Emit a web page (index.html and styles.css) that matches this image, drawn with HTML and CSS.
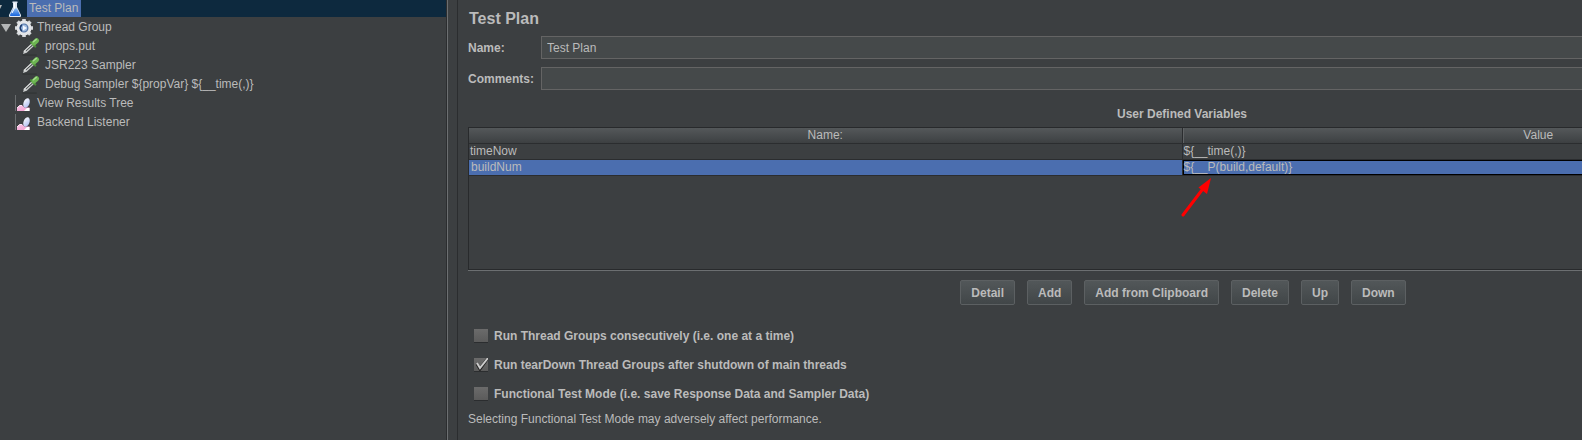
FILE: index.html
```html
<!DOCTYPE html>
<html lang="en">
<head>
<meta charset="utf-8">
<title>Test Plan</title>
<link rel="stylesheet" href="styles.css">
</head>
<body>
<svg class="defs" aria-hidden="true">
  <defs>
    <linearGradient id="flask" x1="0" y1="0" x2="0" y2="1"><stop offset="0" stop-color="#8fbdf0"/><stop offset="1" stop-color="#1462dc"/></linearGradient>
    <linearGradient id="pink" x1="0" y1="0" x2="1" y2="1"><stop offset="0" stop-color="#f7c4e4"/><stop offset="1" stop-color="#f39bd0"/></linearGradient>
    <linearGradient id="lens" x1="0" y1="0" x2="1" y2="1"><stop offset="0" stop-color="#ffffff"/><stop offset="1" stop-color="#a9b9f0"/></linearGradient>
    <symbol id="i-flask" viewBox="0 0 16 18"><path d="M5.500 1.500h5v1.500h-.5v4l4 8q.6 2-1 2H3q-1.600 0-1-2l4-8V3h-.5z" fill="#dfe8f4"/><path d="M6 8.500h4l3 6.500q.2 1-.8 1H3.800q-1 0-.8-1z" fill="url(#flask)"/><path d="M7.500 3v5l-2.500 5" stroke="#fff" fill="none"/></symbol>
    <symbol id="i-gear" viewBox="0 0 20 20"><path d="M10 1v18M1 10h18M3.600 3.600l12.800 12.800M16.400 3.600L3.600 16.400" stroke="#d6d9dc" stroke-width="3.600"/><circle cx="10" cy="10" r="6" fill="#5475a5" stroke="#e4e6e9" stroke-width="3"/><circle cx="9.800" cy="10" r="3.400" fill="#9db9df"/><path d="M9 7.500l4 2.500-4 2.500z" fill="#f4f8ff"/><path d="M8 7a3.500 3.500 0 0 0 0 6" stroke="#1d3c6e" stroke-width="1.500" fill="none"/></symbol>
    <symbol id="i-dropper" viewBox="0 0 20 20"><path d="M1 19h15" stroke="#2e3132"/><path d="M1.500 18l1.500-4L10.500 7l2.500 2.500L5.500 16.500z" fill="#c9cccc"/><path d="M4.500 14.500L11.500 8.500" stroke="#4d5152" stroke-width="1.200"/><path d="M2.500 15.500L10.500 7.500" stroke="#f4f5f5" stroke-width="1"/><path d="M10 5.500l4.500 4.500" stroke="#4a8a38" stroke-width="2.400" stroke-linecap="round"/><path d="M13 6.500L16 3.800" stroke="#6db552" stroke-width="5" stroke-linecap="round"/><path d="M12.500 5L15.500 2.500" stroke="#a5dc8e" stroke-width="1.600" stroke-linecap="round"/></symbol>
    <symbol id="i-chart" viewBox="0 0 17 19"><path d="M.5 1v16" stroke="#6a6d6f"/><path d="M2 17v-3l2.500-2.500h3l2 2h5V17z" fill="url(#pink)"/><ellipse cx="11.500" cy="9" rx="3" ry="5" transform="rotate(20 11.500 9)" fill="url(#lens)"/><path d="M9 17l3-3h2.500v3z" fill="#fff"/><path d="M2 14l2.500-2.500h2.500" stroke="#fde7f5" fill="none"/></symbol>
  </defs>
</svg>
<div class="app">
  <nav class="tree" aria-label="Test plan tree">
    <div class="node root"><svg class="arrow" viewBox="0 0 10 10"><path d="M0 1h8L4 9z"/></svg><svg class="icon flask"><use href="#i-flask"/></svg><span class="selected">Test Plan</span></div>
    <div class="node group"><svg class="arrow" viewBox="0 0 10 10"><path d="M0 1h10L5 9z"/></svg><svg class="icon gear"><use href="#i-gear"/></svg><span>Thread Group</span></div>
    <div class="node child"><svg class="icon dropper"><use href="#i-dropper"/></svg><span>props.put</span></div>
    <div class="node child"><svg class="icon dropper"><use href="#i-dropper"/></svg><span>JSR223 Sampler</span></div>
    <div class="node child"><svg class="icon dropper"><use href="#i-dropper"/></svg><span>Debug Sampler ${propVar} ${__time(,)}</span></div>
    <div class="node listener"><svg class="icon chart"><use href="#i-chart"/></svg><span>View Results Tree</span></div>
    <div class="node listener"><svg class="icon chart"><use href="#i-chart"/></svg><span>Backend Listener</span></div>
  </nav>
  <div class="divider"></div>
  <main class="view">
    <div class="panel">
      <h1 class="title">Test Plan</h1>
      <div class="field"><label for="name">Name:</label><input id="name" type="text" value="Test Plan"></div>
      <div class="field"><label for="comments">Comments:</label><input id="comments" type="text"></div>
      <h2 class="caption">User Defined Variables</h2>
      <div class="table-box">
        <table class="vars">
          <thead><tr><th>Name:</th><th>Value</th></tr></thead>
          <tbody>
            <tr><td>timeNow</td><td>${__time(,)}</td></tr>
            <tr class="active"><td>buildNum</td><td class="focus">${__P(build,default)}</td></tr>
          </tbody>
        </table>
        <svg class="pointer" viewBox="0 0 32 42" aria-hidden="true"><path d="M2 39L21 14" stroke="#f00" stroke-width="3" stroke-linecap="round"/><path d="M30 2L17.500 11.500 26 18z" fill="#f00"/></svg>
      </div>
      <div class="buttons">
        <button type="button">Detail</button><button type="button">Add</button><button type="button">Add from Clipboard</button><button type="button">Delete</button><button type="button">Up</button><button type="button">Down</button>
      </div>
      <div class="options">
        <label><input type="checkbox">Run Thread Groups consecutively (i.e. one at a time)</label>
        <label><input type="checkbox" class="ticked" checked>Run tearDown Thread Groups after shutdown of main threads</label>
        <label><input type="checkbox">Functional Test Mode (i.e. save Response Data and Sampler Data)</label>
      </div>
      <p class="note">Selecting Functional Test Mode may adversely affect performance.</p>
    </div>
  </main>
</div>
</body>
</html>
```
FILE: styles.css
```css
* { box-sizing: border-box; }
body { margin: 0; background: #3c3f41; color: #bbb; font: 12px/15px "Liberation Sans", Arial, sans-serif; overflow: hidden; }
.defs { position: absolute; width: 0; height: 0; }
.app { display: flex; min-height: 100vh; }

.tree { flex: 0 0 447px; }
.node { display: flex; align-items: center; height: 19px; white-space: nowrap; }
.arrow { width: 10px; height: 10px; fill: #b4b6b7; }
.icon { flex: none; }
.root { height: 17px; margin-bottom: 1px; background: #0d293e; }
.root .arrow { margin-left: -6px; }
.flask { width: 16px; height: 18px; margin: 0 8px 0 3px; }
.selected { padding: 0 3px 0 2px; margin-left: -4px; background: #4b6eaf; line-height: 17px; }
.group { padding-left: 1px; }
.gear { width: 20px; height: 20px; margin: 0 3px; }
.child { padding-left: 21px; }
.dropper { width: 20px; height: 19px; margin-right: 4px; }
.listener { padding-left: 15px; }
.chart { width: 17px; height: 19px; margin-right: 5px; }

.divider { flex: 0 0 11px; border-left: 1px solid #6c6f71; border-right: 1px solid #2b2d2f; box-shadow: -1px 0 #2b2d2f; }
.view { flex: 1; min-width: 0; overflow: hidden; }
.panel { width: calc(100% + 312px); padding: 10px 0 0 10px; }
.title { margin: 0 0 8px 1px; font-size: 16px; line-height: 18px; }
.field { display: flex; align-items: center; height: 23px; margin-bottom: 8px; }
.field label { width: 73px; padding-top: 1px; font-weight: bold; }
.field input { flex: 1; height: 23px; padding: 0 5px; border: 1px solid #646464; background: #45494a; color: #bbb; font: inherit; outline: none; }
.caption { margin: 16px 0 4px; padding-left: 2px; font-size: 12px; line-height: 17px; text-align: center; }
.table-box { position: relative; height: 143px; border: 1px solid #282a2c; border-right: 0; box-shadow: 0 1px #6c6f71; }
.vars { width: 100%; border-collapse: separate; border-spacing: 0; table-layout: fixed; }
.vars th { height: 16px; padding: 0; font-weight: normal; line-height: 15px; border-bottom: 1px solid #2b2d2f; background: linear-gradient(#54585a, #3d4042); }
.vars th + th { border-left: 1px solid #2b2d2f; box-shadow: inset 1px 0 #606365; }
.vars td { height: 16px; padding: 0 1px; line-height: 15px; border-bottom: 1px solid #2b2d2f; }
.vars td + td { border-left: 1px solid #2b2d2f; }
.vars .active td { background: #4b6eaf; }
.vars .active td:first-child { padding-left: 2px; }
.vars .active .focus { box-shadow: inset 0 0 0 1px #000; }
.pointer { position: absolute; left: calc(50% - 1px); top: 48px; width: 32px; height: 42px; }
.buttons { display: flex; justify-content: center; gap: 12px; margin-top: 10px; padding-left: 4px; }
.buttons button { height: 25px; padding: 1px 10px 0; border: 1px solid #5c6062; border-radius: 2px; background: linear-gradient(#525759, #414648); color: #bbb; font: bold 12px/15px "Liberation Sans", Arial, sans-serif; }
.options { margin-top: 16px; }
.options label { display: flex; align-items: center; height: 29px; padding: 1px 0 0 6px; font-weight: bold; }
.options input { appearance: none; width: 14px; height: 13px; margin: 0 6px 1px 0; background: linear-gradient(#6b6b6b, #5b5b5b); box-shadow: 0 1px #2b2d2f; }
.options .ticked { background: url("data:image/svg+xml,%3Csvg xmlns='http://www.w3.org/2000/svg' viewBox='0 0 14 13'%3E%3Cpath d='M3 6l3 5 8-11' fill='none' stroke='%23222' stroke-width='3'/%3E%3Cpath d='M3 5l3 5 8-10' fill='none' stroke='%23ccc' stroke-width='2'/%3E%3C/svg%3E"), linear-gradient(#6b6b6b, #5b5b5b); }
.note { margin: 4px 0 0; }
```
